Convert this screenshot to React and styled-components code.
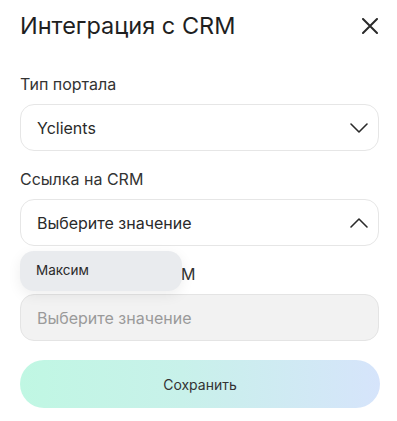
import styled, { createGlobalStyle } from 'styled-components'

const Global = createGlobalStyle`
    body{
        margin: 0;
        background: #ffffff;
        font-family: Inter, "Noto Sans", sans-serif;
    }
`

function Chevron({ up }){
    return(
        <svg width="20" height="20" viewBox="0 0 20 20" fill="none">
            <path d={up ? 'M2 14 L10 6 L18 14' : 'M2 6 L10 14 L18 6'} stroke="#2a2a2a" strokeWidth="1.6" strokeLinecap="round" strokeLinejoin="round"/>
        </svg>
    )
}

export default function App(){
    return(
        <>
        <Global/>
        <Modal>
            <Header>
                <Title>Интеграция с CRM</Title>
                <Close aria-label="close">
                    <svg width="16" height="16" viewBox="0 0 16 16" fill="none">
                        <path d="M1 1 L15 15 M15 1 L1 15" stroke="#2a2a2a" strokeWidth="2" strokeLinecap="round"/>
                    </svg>
                </Close>
            </Header>
            <Field>
                <Label>Тип портала</Label>
                <Select>
                    <Value>Yclients</Value>
                    <Chevron/>
                </Select>
            </Field>
            <Field>
                <Label>Ссылка на CRM</Label>
                <Wrap>
                    <Select>
                        <Value>Выберите значение</Value>
                        <Chevron up/>
                    </Select>
                    <Menu>
                        <Option>Максим</Option>
                    </Menu>
                </Wrap>
            </Field>
            <Field>
                <Label>Ответственный в CRM</Label>
                <Select disabled>
                    <Value muted>Выберите значение</Value>
                </Select>
            </Field>
            <Save>Сохранить</Save>
        </Modal>
        </>
    )
}

const Modal = styled.div`
    box-sizing: border-box;
    width: 397px;
    padding: 11px 18px 0 20px;
    display: flex;
    flex-direction: column;
`
const Header = styled.div`
    display: flex;
    align-items: center;
    justify-content: space-between;
    height: 28px;
    margin-bottom: 35px;
`
const Title = styled.div`
    font-size: 23.5px;
    line-height: 28px;
    font-weight: 400;
    color: #1f1f1f;
    margin-top: 1px;
`
const Close = styled.button`
    border: none;
    background: none;
    padding: 0;
    width: 16px;
    height: 16px;
    margin-right: 1px;
    margin-top: 2px;
    display: flex;
`
const Field = styled.div`
    display: flex;
    flex-direction: column;
    gap: 10px;
    margin-bottom: 18px;
`
const Label = styled.div`
    font-size: 16px;
    line-height: 20px;
    color: #333333;
`
const Wrap = styled.div`
    position: relative;
`
const Select = styled.div`
    box-sizing: border-box;
    height: 47px;
    width: 359px;
    border: 1px solid ${p => p.disabled ? '#e4e4e4' : '#e6e6e6'};
    background: ${p => p.disabled ? '#f2f2f2' : '#ffffff'};
    border-radius: 14px;
    padding: 0 9px 0 16px;
    display: flex;
    align-items: center;
    justify-content: space-between;
`
const Value = styled.div`
    font-size: 16px;
    color: ${p => p.muted ? '#9a9a9a' : '#2a2a2a'};
`
const Menu = styled.div`
    position: absolute;
    top: 52px;
    left: 0;
    width: 162px;
    height: 40px;
    box-sizing: border-box;
    background: #e9ebee;
    border-radius: 14px;
    box-shadow: 0 4px 14px rgba(0, 0, 0, 0.07);
    display: flex;
    align-items: center;
    padding-left: 16px;
    z-index: 2;
`
const Option = styled.div`
    font-size: 13.5px;
    color: #2a2a2a;
    margin-top: -2px;
`
const Save = styled.button`
    margin-top: 1px;
    width: 360px;
    height: 48px;
    border: none;
    border-radius: 24px;
    background: linear-gradient(90deg, #c0f7e3 0%, #c8f1ea 45%, #d6e4fb 100%);
    font-family: Inter, "Noto Sans", sans-serif;
    font-size: 14px;
    color: #333333;
`
